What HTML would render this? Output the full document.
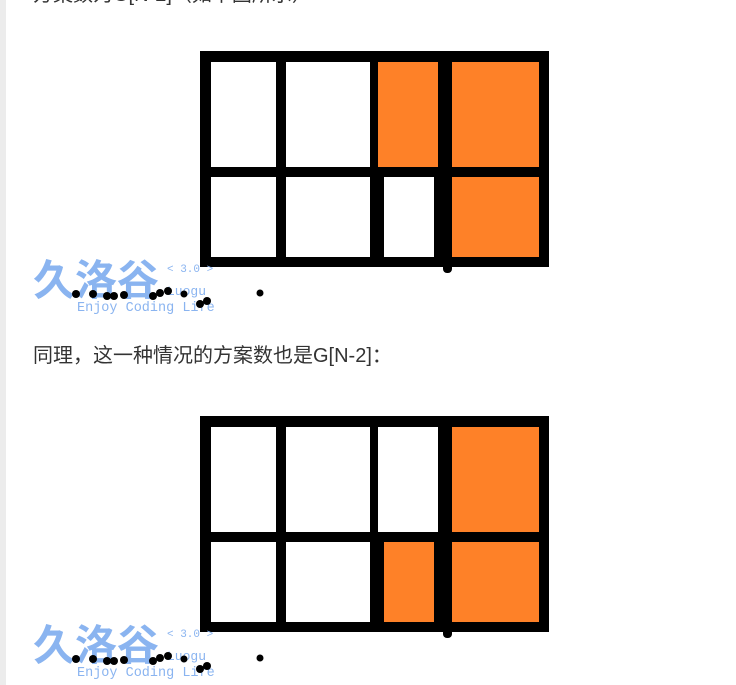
<!DOCTYPE html>
<html><head><meta charset="utf-8"><style>
body{margin:0;width:736px;height:685px;background:#fff;position:relative;overflow:hidden;font-family:"Liberation Sans","Noto Sans CJK SC",sans-serif}
.strip{position:absolute;left:0;top:0;width:6px;height:685px;background:#ececec}
.t{position:absolute;left:33px;font-size:20px;color:#333;white-space:nowrap;line-height:24px}
.g{position:absolute;left:0;width:736px;height:300px}
.wm{position:absolute;left:33px;width:240px;height:60px}
</style></head><body>
<div class="strip"></div>
<div class="t" style="top:-17px">方案数为G[N-2]（如下图所示）</div>
<div class="t" style="top:344px">同理，这一种情况的方案数也是G[N-2]：</div>

<svg class="g" style="top:0" viewBox="0 0 736 300">
<rect x="200" y="51" width="349" height="216" fill="#000"/>
<rect x="211" y="62" width="65" height="105" fill="#fff"/>
<rect x="286" y="62" width="84" height="105" fill="#fff"/>
<rect x="378" y="62" width="60" height="105" fill="#fe8128"/>
<rect x="452" y="62" width="87" height="105" fill="#fe8128"/>
<rect x="211" y="177" width="65" height="80" fill="#fff"/>
<rect x="286" y="177" width="84" height="80" fill="#fff"/>
<rect x="384" y="177" width="50" height="80" fill="#fff"/>
<rect x="452" y="177" width="87" height="80" fill="#fe8128"/>
<rect x="443" y="255" width="9" height="18" rx="4" fill="#000"/>
</svg>
<svg class="g" style="top:365px" viewBox="0 0 736 300">
<rect x="200" y="51" width="349" height="216" fill="#000"/>
<rect x="211" y="62" width="65" height="105" fill="#fff"/>
<rect x="286" y="62" width="84" height="105" fill="#fff"/>
<rect x="378" y="62" width="60" height="105" fill="#fff"/>
<rect x="452" y="62" width="87" height="105" fill="#fe8128"/>
<rect x="211" y="177" width="65" height="80" fill="#fff"/>
<rect x="286" y="177" width="84" height="80" fill="#fff"/>
<rect x="384" y="177" width="50" height="80" fill="#fe8128"/>
<rect x="452" y="177" width="87" height="80" fill="#fe8128"/>
<rect x="443" y="255" width="9" height="18" rx="4" fill="#000"/>
</svg>

<svg class="wm" style="top:255px" viewBox="0 0 240 60">
<text x="0" y="40" font-size="42" font-weight="bold" fill="#8ab4f0" font-family="Noto Sans CJK SC,sans-serif">久洛谷</text>
<text x="134" y="17" font-size="11" fill="#8ab4f0" font-family="Liberation Mono,monospace">&lt; 3.0 &gt;</text>
<text x="134" y="40" font-size="13" fill="#8ab4f0" font-family="Liberation Mono,monospace">Luogu</text>
<text x="44" y="56" font-size="13.5" fill="#8ab4f0" font-family="Liberation Mono,monospace">Enjoy Coding Life</text>
<g fill="#000"><circle cx="43" cy="39" r="4"/><circle cx="60" cy="39" r="4"/><circle cx="74" cy="41" r="4"/><circle cx="81" cy="41" r="4"/><circle cx="91" cy="40" r="4"/><circle cx="120" cy="41" r="4"/><circle cx="127" cy="38" r="4"/><circle cx="135" cy="36" r="4"/><circle cx="151" cy="39" r="3.5"/><circle cx="167" cy="49" r="4"/><circle cx="174" cy="46" r="4"/><circle cx="227" cy="38" r="3.5"/></g>
</svg>
<svg class="wm" style="top:620px" viewBox="0 0 240 60">
<text x="0" y="40" font-size="42" font-weight="bold" fill="#8ab4f0" font-family="Noto Sans CJK SC,sans-serif">久洛谷</text>
<text x="134" y="17" font-size="11" fill="#8ab4f0" font-family="Liberation Mono,monospace">&lt; 3.0 &gt;</text>
<text x="134" y="40" font-size="13" fill="#8ab4f0" font-family="Liberation Mono,monospace">Luogu</text>
<text x="44" y="56" font-size="13.5" fill="#8ab4f0" font-family="Liberation Mono,monospace">Enjoy Coding Life</text>
<g fill="#000"><circle cx="43" cy="39" r="4"/><circle cx="60" cy="39" r="4"/><circle cx="74" cy="41" r="4"/><circle cx="81" cy="41" r="4"/><circle cx="91" cy="40" r="4"/><circle cx="120" cy="41" r="4"/><circle cx="127" cy="38" r="4"/><circle cx="135" cy="36" r="4"/><circle cx="151" cy="39" r="3.5"/><circle cx="167" cy="49" r="4"/><circle cx="174" cy="46" r="4"/><circle cx="227" cy="38" r="3.5"/></g>
</svg>
</body></html>
